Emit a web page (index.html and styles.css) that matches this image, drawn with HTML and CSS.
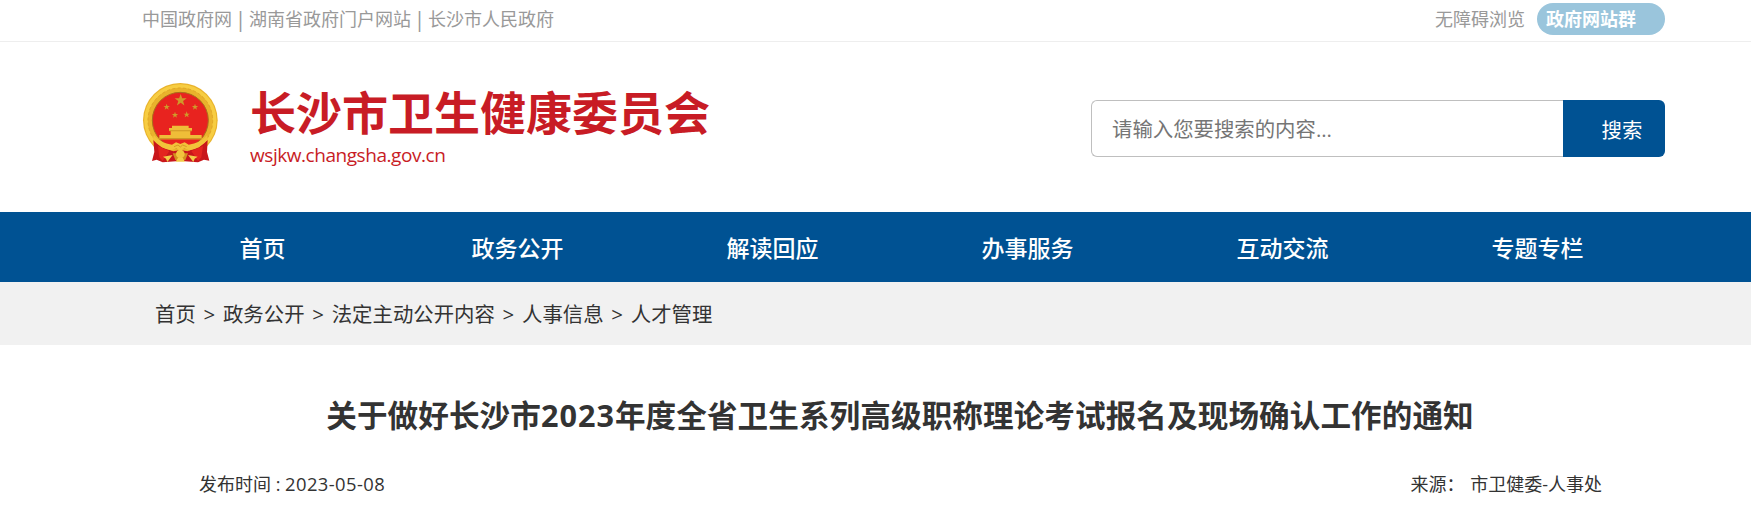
FILE: index.html
```
<!DOCTYPE html>
<html lang="zh-CN">
<head>
	<meta charset="UTF-8">
	<title>长沙市卫生健康委员会</title>
	<link rel="stylesheet" href="styles.css">
</head>
<body>
	<div class="top">
		<div class="wrap top-in">
			<div class="links">
				<a>中国政府网</a><span class="line">|</span><a>湖南省政府门户网站</a><span class="line">|</span><a>长沙市人民政府</a>
			</div>
			<a class="wza">无障碍浏览</a>
			<a class="group">政府网站群</a>
		</div>
	</div>
	<div class="wrap header">
		<svg class="logo" viewBox="36 36 228 246">
			<defs>
				<g id="star"><path d="M0-10 2.4-3.1 9.5-3.1 3.8 1.2 5.9 8.1 0 4-5.9 8.1-3.8 1.2-9.5-3.1-2.4-3.1z"/></g>
			</defs>
			<!-- 麦稻穗圈 -->
			<circle cx="151" cy="151" r="112" fill="#e9b32c"/>
			<circle cx="151" cy="151" r="103" fill="none" stroke="#f7cd42" stroke-width="11"/>
			<circle cx="151" cy="151" r="97" fill="none" stroke="#e0a728" stroke-width="3" stroke-dasharray="9 7"/>
			<circle cx="151" cy="151" r="84" fill="#e8231f" stroke="#a9701c" stroke-width="3"/>
			<g fill="#cf9a2a">
				<use href="#star" transform="translate(152 91) scale(1.9)"/>
				<use href="#star" transform="translate(110 111)"/>
				<use href="#star" transform="translate(195 111)"/>
				<use href="#star" transform="translate(135 135)"/>
				<use href="#star" transform="translate(170 134)"/>
			</g>
			<!-- 天安门 -->
			<path fill="#efbd38" d="M126 167h50v7h10v9h-5v12h34v13H88v-13h34v-12h-5v-9h9z"/>
			<path fill="#cf9626" d="M118 181h68v3h-68zM88 204h127v4H88z"/>
			<!-- 红绸 -->
			<path fill="#c8161b" d="M70 210 96 232 130 244 151 240 172 244 206 232 233 210 231 246 238 272 222 269 204 277 164 274 151 267 138 274 98 277 80 269 66 273 73 246z"/>
			<path fill="#e3241f" d="M84 228 118 243 98 273 88 262zM219 228 184 243 204 273 214 262z"/>
			<!-- 穗结 -->
			<path fill="#f2c33a" d="M72 196Q92 220 126 224L138 217 151 222 164 217 176 224Q210 220 231 196L234 208Q212 236 178 241L163 235 151 243 139 235 124 241Q90 236 68 208z"/>
			<path fill="none" stroke="#d79a25" stroke-width="3" d="M132 230 144 225 151 231 158 225 170 230"/>
			<!-- 齿轮 -->
			<path fill="#d3911f" d="M128 250h46l-8 20h-30z"/>
			<circle cx="151" cy="252" r="13" fill="#f2c43d"/>
			<path fill="#f4cb48" d="M99 260 128 255 112 276 108 266zM203 260 174 255 190 276 194 266zM137 275 144 263h14l7 12z"/>
		</svg>
		<div class="name">
			<h1>长沙市卫生健康委员会</h1>
			<p>wsjkw.changsha.gov.cn</p>
		</div>
		<div class="search">
			<input type="text" placeholder="请输入您要搜索的内容...">
			<button>搜索</button>
		</div>
	</div>
	<div class="nav">
		<ul class="wrap">
			<li>首页</li>
			<li>政务公开</li>
			<li>解读回应</li>
			<li>办事服务</li>
			<li>互动交流</li>
			<li>专题专栏</li>
		</ul>
	</div>
	<div class="position">
		<div class="wrap crumbs">
			<a>首页</a><span>&gt;</span><a>政务公开</a><span>&gt;</span><a>法定主动公开内容</a><span>&gt;</span><a>人事信息</a><span>&gt;</span><a>人才管理</a>
		</div>
	</div>
	<div class="wrap article">
		<h2>关于做好长沙市<span class="year">2023</span>年度全省卫生系列高级职称理论考试报名及现场确认工作的通知</h2>
		<div class="info">
			<p>发布时间 : <span class="date">2023-05-08</span></p>
			<p class="source">来源： 市卫健委-人事处</p>
		</div>
	</div>
</body>
</html>
```
FILE: styles.css
```
* {
	margin: 0;
	padding: 0;
	box-sizing: border-box;
}
body {
	min-width: 1800px;
	overflow: hidden;
	background-color: #fff;
	color: #333;
	font-size: 18px;
	font-family: "Open Sans", "Noto Sans CJK SC", sans-serif;
}
.wrap {
	width: 1530px;
	margin: 0 auto;
}
.top {
	height: 42px;
	border-bottom: 1px solid #eee;
	color: #999;
}
.top-in {
	display: flex;
	padding: 3px 0 0 7px;
	line-height: 32px;
}
.links {
	display: flex;
	flex: 1;
}
.line {
	width: 17px;
	font-size: 21px;
	text-align: center;
}
.wza {
	margin-right: 12px;
}
.group {
	width: 128px;
	height: 32px;
	padding-left: 9px;
	border-radius: 16px;
	background-color: #9ac5dc;
	color: #fff;
	font-weight: bold;
}
.header {
	display: flex;
	height: 170px;
	padding-left: 7px;
}
.logo {
	width: 76px;
	height: 82px;
	margin-top: 40px;
}
.name {
	flex: 1;
	padding: 40px 0 0 32px;
	color: #c81c25;
}
.name h1 {
	font-size: 46px;
	line-height: 61px;
}
.name p {
	font-size: 19px;
	line-height: 24px;
	letter-spacing: -0.45px;
}
.search {
	display: flex;
	width: 574px;
	height: 57px;
	margin-top: 58px;
}
.search input {
	width: 472px;
	padding-left: 20px;
	border: 1px solid #bfbfbf;
	border-right: none;
	border-radius: 6px 0 0 6px;
	outline: none;
	font-size: 20.4px;
	font-family: inherit;
}
.search input::placeholder {
	color: #757575;
}
.search button {
	width: 102px;
	padding-left: 16px;
	border: none;
	border-radius: 0 6px 6px 0;
	background-color: #005293;
	color: #fff;
	font-size: 20.4px;
	font-family: inherit;
}
.nav {
	height: 70px;
	background-color: #005293;
}
.nav ul {
	display: flex;
	list-style: none;
}
.nav li {
	flex: 1;
	color: #fff;
	font-size: 23px;
	font-weight: 500;
	line-height: 72px;
	text-align: center;
}
.position {
	height: 63px;
	background-color: #f1f1f1;
}
.crumbs {
	display: flex;
	padding-left: 20px;
	font-size: 20.4px;
	line-height: 64px;
}
.crumbs span {
	width: 27.2px;
	text-align: center;
}
.article {
	padding-top: 45px;
}
.article h2 {
	font-size: 30.6px;
	line-height: 50px;
	letter-spacing: 0.08px;
	text-align: center;
}
.year {
	letter-spacing: 1px;
}
.info {
	display: flex;
	justify-content: space-between;
	padding: 31px 63px 0 64px;
	line-height: 26px;
}
.date {
	font-size: 18.4px;
	letter-spacing: 0.4px;
}
.source {
	word-spacing: 1px;
}
```
